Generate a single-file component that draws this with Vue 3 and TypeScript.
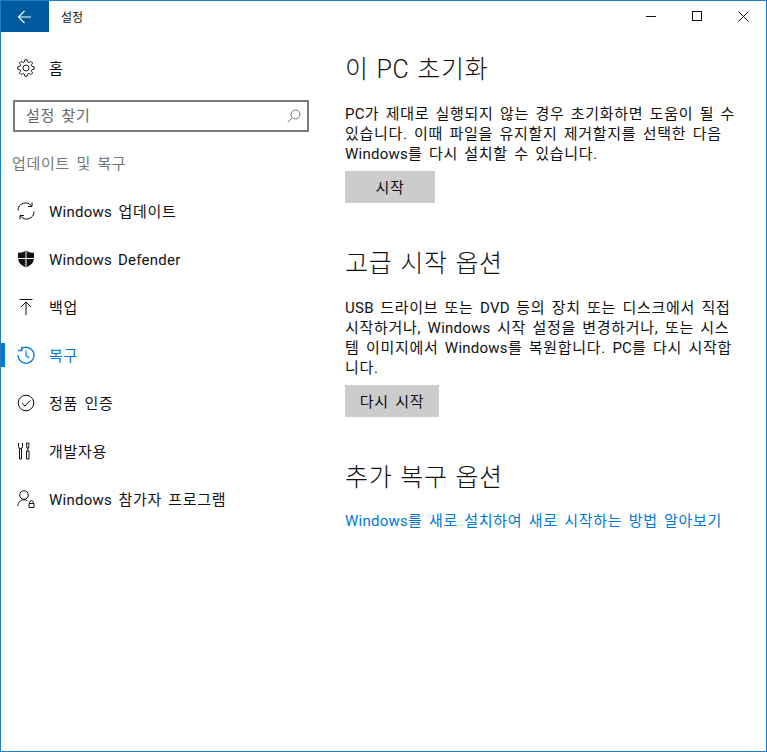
<script setup lang="ts">
interface NavItem { latin?: string; label: string; icon: string; active?: boolean }
const items: NavItem[] = [
  { latin: 'Windows', label: ' 업데이트', icon: 'sync' },
  { latin: 'Windows Defender', label: '', icon: 'shield' },
  { label: '백업', icon: 'backup' },
  { label: '복구', icon: 'history', active: true },
  { label: '정품 인증', icon: 'check' },
  { label: '개발자용', icon: 'tools' },
  { latin: 'Windows', label: ' 참가자 프로그램', icon: 'insider' },
]

function gearPath(teeth: number, outer: number, inner: number): string {
  const pts: string[] = []
  const step = (Math.PI * 2) / teeth
  for (let i = 0; i < teeth; i++) {
    const a = i * step
    const angles: [number, number][] = [
      [a - step * 0.32, inner],
      [a - step * 0.18, outer],
      [a + step * 0.18, outer],
      [a + step * 0.32, inner],
    ]
    for (const [t, r] of angles) {
      pts.push(`${(9 + r * Math.sin(t)).toFixed(2)} ${(9 - r * Math.cos(t)).toFixed(2)}`)
    }
  }
  return `M${pts.join('L')}Z`
}
const gear = gearPath(8, 8.3, 6.3)
</script>

<template>
  <div class="window">
    <aside class="sidebar">
      <div class="titlebar-left">
        <button class="back" aria-label="뒤로">
          <svg width="16" height="16" viewBox="0 0 16 16" fill="none" stroke="#fff" stroke-width="1.1">
            <path d="M7.5 2 1.5 8l6 6M1.5 8H14" />
          </svg>
        </button>
        <span class="app-title">설정</span>
      </div>
      <div class="home">
        <svg class="icon" width="18" height="18" viewBox="0 0 18 18" fill="none" stroke="#222" stroke-width="1">
          <circle cx="9" cy="9" r="3" />
          <path :d="gear" />
        </svg>
        <span class="label">홈</span>
      </div>
      <div class="search">
        <span class="search-text">설정 찾기</span>
        <svg width="14" height="14" viewBox="0 0 14 14" fill="none" stroke="#777" stroke-width="1">
          <circle cx="8.500" cy="5.500" r="4.500" />
          <path d="M5.200 8.800 .7 13.300" />
        </svg>
      </div>
      <div class="section-label">업데이트 및 복구</div>
      <nav class="nav">
        <div v-for="item in items" :key="item.icon" class="nav-item" :class="{ active: item.active }">
          <svg class="icon" width="18" height="18" viewBox="0 0 18 18" fill="none" stroke="currentColor" stroke-width="1">
            <template v-if="item.icon === 'sync'">
              <path d="M1 8.500A7.500 7.500 0 0 1 14.500 4M17 9.500A7.500 7.500 0 0 1 3.500 14" />
              <path d="M15 .5V4.500H11M3 17.500V13.500H7" />
            </template>
            <template v-else-if="item.icon === 'shield'">
              <path d="M9 .5c2 1.500 4.800 2.300 8 2.300V8c0 4.500-3.300 7.500-8 9.500C4.300 15.500 1 12.500 1 8V2.800C4.200 2.800 7 2 9 .5z" fill="#111" stroke="none" />
              <path d="M9 1v17M1 8.500h16" stroke="#fff" stroke-width="1" />
            </template>
            <template v-else-if="item.icon === 'backup'">
              <path d="M2.500 1.500h13M9 17V4M4 9l5-5 5 5" />
            </template>
            <template v-else-if="item.icon === 'history'">
              <path d="M4.300 2.800A8 8 0 1 1 1 9" stroke-width="1.300" />
              <path d="M4.800 .8V4.500H1.200" stroke-width="1.300" />
              <path d="M9 4.500V9.500L12 12" stroke-width="1.200" />
            </template>
            <template v-else-if="item.icon === 'check'">
              <circle cx="9" cy="9" r="7.800" />
              <path d="M5.200 9.300 8 12l5-5.500" />
            </template>
            <template v-else-if="item.icon === 'tools'">
              <path d="M1.500 1v3.500a2 2 0 0 0 4 0V1M2.500 6.500h2V17h-2zM9.500 1h2.500l-.3 5h-1.900zM10.750 6v3M9.500 9h2.500v8h-2.500z" />
            </template>
            <template v-else>
              <circle cx="7" cy="5" r="4.300" />
              <path d="M.7 16c.6-3.800 3-6.200 6.300-6.200 1.300 0 2.500.4 3.400 1" />
              <path d="M12.700 13.500V12.500a1.800 1.800 0 0 1 3.600 0v1M12 13.500h5v4h-5z" />
            </template>
          </svg>
          <span class="label"><span v-if="item.latin" class="la">{{ item.latin }}</span>{{ item.label }}</span>
        </div>
      </nav>
    </aside>

    <main class="content">
      <div class="window-controls">
        <svg width="11" height="11" viewBox="0 0 11 11" stroke="#111" fill="none"><path d="M0 5.500h10" /></svg>
        <svg width="11" height="11" viewBox="0 0 11 11" stroke="#111" fill="none"><rect x=".5" y=".5" width="9" height="9" /></svg>
        <svg width="11" height="11" viewBox="0 0 11 11" stroke="#111" fill="none"><path d="M.5.5l10 10M10.500.5l-10 10" /></svg>
      </div>

      <section class="block first">
        <h2>이 PC 초기화</h2>
        <p><span class="la">PC</span>가 제대로 실행되지 않는 경우 초기화하면 도움이 될 수<br />있습니다. 이때 파일을 유지할지 제거할지를 선택한 다음<br /><span class="la">Windows</span>를 다시 설치할 수 있습니다.</p>
        <button class="action wide"><span class="btn-text">시작</span></button>
      </section>

      <section class="block second">
        <h2>고급 시작 옵션</h2>
        <p><span class="la">USB</span> 드라이브 또는 <span class="la">DVD</span> 등의 장치 또는 디스크에서 직접<br />시작하거나, <span class="la">Windows</span> 시작 설정을 변경하거나, 또는 시스<br />템 이미지에서 <span class="la">Windows</span>를 복원합니다. <span class="la">PC</span>를 다시 시작합<br />니다.</p>
        <button class="action"><span class="btn-text">다시 시작</span></button>
      </section>

      <section class="block third">
        <h2>추가 복구 옵션</h2>
        <a class="link"><span class="la">Windows</span>를 새로 설치하여 새로 시작하는 방법 알아보기</a>
      </section>
    </main>
  </div>
</template>

<style>
html, body { margin: 0; padding: 0; background: #fff; }
</style>

<style scoped>
.window {
  box-sizing: border-box;
  width: 767px;
  height: 752px;
  display: flex;
  border: 1px solid #1a7fcf;
  background: #fff;
  color: #111;
  font-family: Roboto, "Noto Sans CJK KR", sans-serif;
  font-size: 15px;
  letter-spacing: 0.7px;
  word-spacing: 2px;
  overflow: hidden;
}
.la { letter-spacing: 0.25px; }
.label { line-height: 20px; padding-top: 2px; white-space: pre; }
.sidebar { width: 330px; flex: none; display: flex; flex-direction: column; }
.titlebar-left { display: flex; align-items: center; height: 31px; }
.back {
  width: 48px; height: 31px; padding: 0; border: 0;
  background: #005a9e;
  display: flex; align-items: center; justify-content: center;
}
.app-title { margin-left: 12px; font-size: 12px; color: #111; letter-spacing: 0; }
.home { display: flex; align-items: center; height: 48px; margin-top: 12px; padding-left: 16px; }
.icon { flex: none; margin-right: 14px; }
.search {
  box-sizing: border-box;
  margin: 8px 0 0 12px;
  width: 296px; height: 32px;
  border: 2px solid #7a7a7a;
  display: flex; align-items: center; justify-content: space-between;
  padding: 0 6px 0 11px;
  color: #666;
}
.search-text { margin-bottom: 3px; }
.section-label { margin: 20px 0 0 11px; height: 24px; line-height: 24px; color: #767676; }
.nav { margin-top: 11px; }
.nav-item {
  position: relative;
  display: flex; align-items: center;
  height: 48px;
  padding-left: 16px;
  color: #111;
}
.nav-item.active { color: #0078d7; }
.nav-item.active::before {
  content: "";
  position: absolute; left: 0; top: 12px;
  width: 4px; height: 24px;
  background: #0078d7;
}
.content { flex: 1; position: relative; padding-left: 14px; }
.window-controls {
  position: absolute; top: 10px; right: 0;
  display: flex; gap: 35px; padding-right: 17px;
  letter-spacing: 0;
}
.block { position: relative; }
.first { padding-top: 51px; }
.second { padding-top: 43px; }
.third { padding-top: 43px; }
h2 { margin: 0; font-size: 25px; font-weight: 300; line-height: 36px; color: #111; letter-spacing: 0.7px; word-spacing: 1px; }
p { margin: 16px 0 0; line-height: 20px; color: #111; white-space: nowrap; }
.action {
  display: block;
  margin-top: 7px;
  height: 32px; width: 94px;
  border: 0; padding: 0;
  background: #ccc;
  color: #111;
  font: inherit;
  letter-spacing: inherit;
  word-spacing: inherit;
}
.btn-text { position: relative; top: -1px; }
.action.wide { width: 90px; }
.link { display: block; margin-top: 15px; line-height: 20px; color: #0078d7; white-space: nowrap; }
</style>
